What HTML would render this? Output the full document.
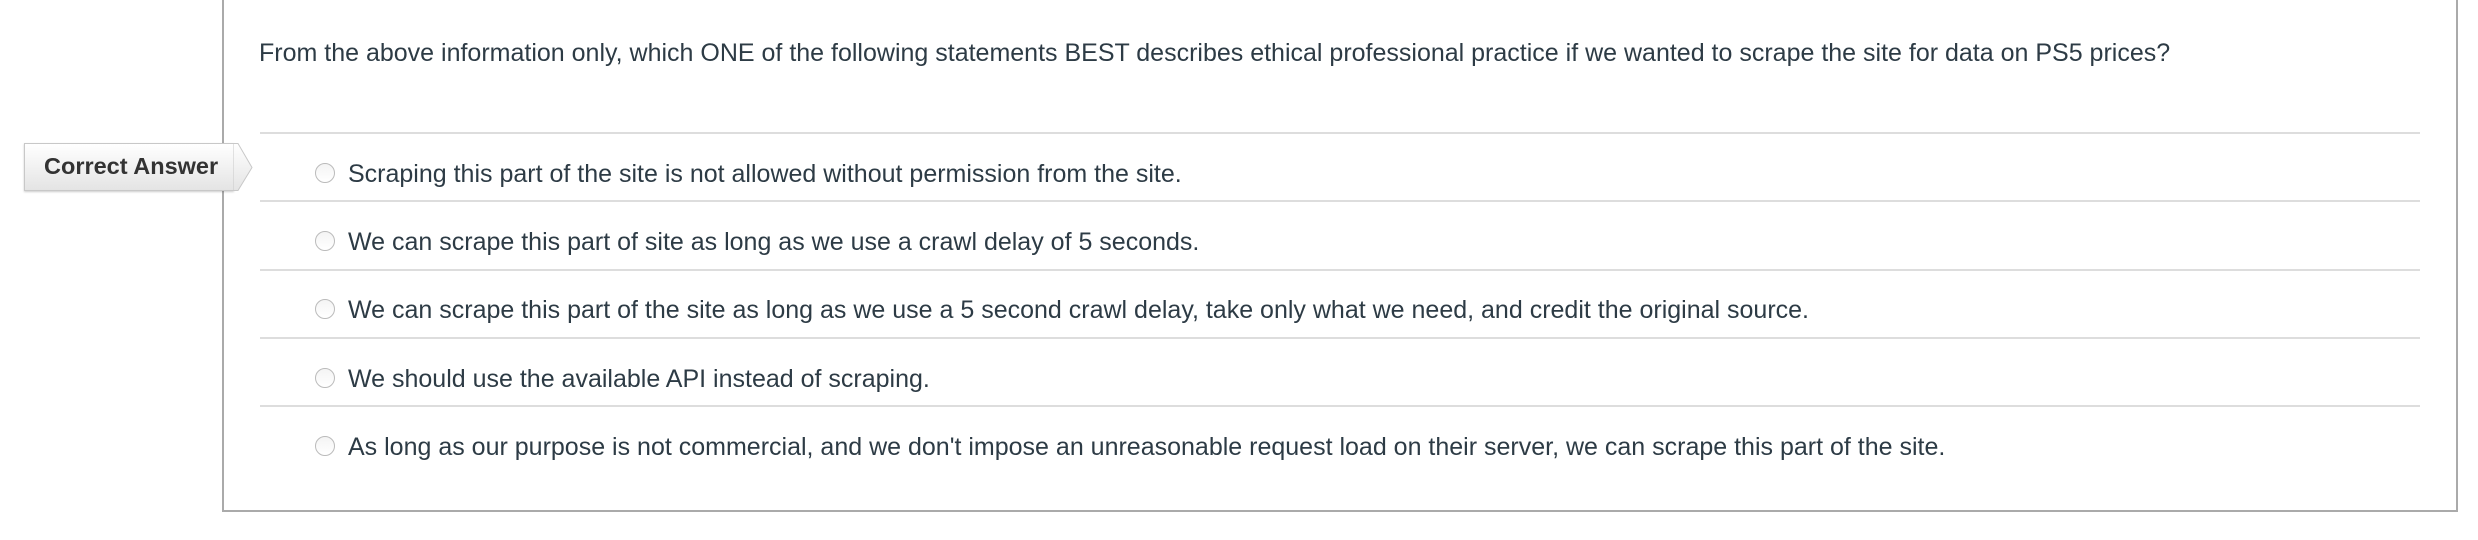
<!DOCTYPE html>
<html><head><meta charset="utf-8"><style>
html,body{margin:0;padding:0;background:#fff;width:2478px;height:540px;overflow:hidden;font-family:"Liberation Sans",sans-serif;color:#2d3b45}
.box{position:absolute;left:222px;top:-10px;width:2236px;height:522px;border:2px solid #aaa;border-top:none;box-sizing:border-box}
.q{position:absolute;left:259px;top:39px;font-size:25px;white-space:nowrap}
.line{position:absolute;left:260px;width:2160px;height:2px;background:#ddd}
.opt{position:absolute;left:315px;font-size:25px;white-space:nowrap;height:30px;line-height:30px}
.opt i{display:inline-block;width:18px;height:18px;border:1px solid #bbb;border-radius:50%;vertical-align:middle;margin-right:13px;position:relative;top:-2px;background:linear-gradient(#f4f4f4,#fff)}
.tag{position:absolute;left:24px;top:143px;width:210px;height:48px;box-sizing:border-box;border:1px solid #c8c8c8;border-right:none;background:linear-gradient(#fff,#e4e4e4);font-weight:bold;font-size:23.5px;line-height:44px;padding-left:19px;color:#333;box-shadow:0 1px 2px rgba(0,0,0,.2)}
.tip{position:absolute;left:233px;top:143px}
</style></head><body>
<div class="box"></div>
<div class="q">From the above information only, which ONE of the following statements BEST describes ethical professional practice if we wanted to scrape the site for data on PS5 prices?</div>
<div class="line" style="top:132px"></div>
<div class="line" style="top:200px"></div>
<div class="line" style="top:269px"></div>
<div class="line" style="top:337px"></div>
<div class="line" style="top:405px"></div>
<div class="tag">Correct Answer</div>
<svg class="tip" width="22" height="50"><defs><linearGradient id="g" x1="0" y1="0" x2="0" y2="1"><stop offset="0" stop-color="#fff"/><stop offset="1" stop-color="#e4e4e4"/></linearGradient></defs><path d="M0 0.5H5L19 24.5L5 47.5H0Z" fill="url(#g)" stroke="#c8c8c8"/></svg>
<div class="opt" style="top:159px"><i></i>Scraping this part of the site is not allowed without permission from the site.</div>
<div class="opt" style="top:227px"><i></i>We can scrape this part of site as long as we use a crawl delay of 5 seconds.</div>
<div class="opt" style="top:295px"><i></i>We can scrape this part of the site as long as we use a 5 second crawl delay, take only what we need, and credit the original source.</div>
<div class="opt" style="top:364px"><i></i>We should use the available API instead of scraping.</div>
<div class="opt" style="top:432px"><i></i>As long as our purpose is not commercial, and we don't impose an unreasonable request load on their server, we can scrape this part of the site.</div>
</body></html>
